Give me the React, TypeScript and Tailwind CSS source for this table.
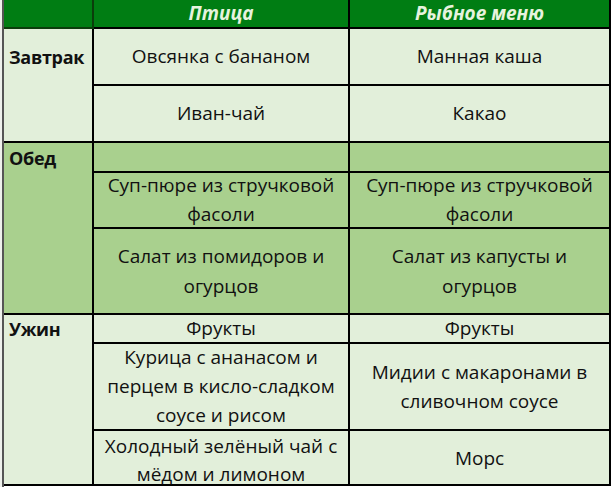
const cell =
  'flex items-center justify-center text-center border-r-2 border-b-2 border-black';
const label = 'flex items-center pl-[5px] font-bold text-[18px] tracking-[-0.3px]';

export default function App() {
  return (
    <div
      className="flex w-[611px] h-[487px] bg-white text-[19px] text-[#111]"
      style={{ fontFamily: '"Open Sans", "Noto Sans", sans-serif' }}
    >
      <div className="w-[3px] bg-[#eef1ec]" />
      <div className="grid grid-cols-[90px_256px_261px] grid-rows-[29px_57px_57px_30px_56px_86px_29px_87px_55px] border-l-2 border-[#555]">
        {/* header */}
        <div className="bg-[#007d13] border-r-2 border-b-2 border-[#0b3d0b]" />
        <div className={`${cell} bg-[#007d13] font-bold italic text-[#e6f3de]`}>Птица</div>
        <div className={`${cell} bg-[#007d13] font-bold italic text-[#e6f3de]`}>Рыбное меню</div>

        {/* Завтрак */}
        <div className="row-span-2 bg-[#e2efda] border-r-2 border-b-2 border-black">
          <div className={`h-[57px] ${label}`}>Завтрак</div>
        </div>
        <div className={`${cell} bg-[#e2efda]`}>Овсянка с бананом</div>
        <div className={`${cell} bg-[#e2efda]`}>Манная каша</div>
        <div className={`${cell} bg-[#e2efda]`}>Иван-чай</div>
        <div className={`${cell} bg-[#e2efda]`}>Какао</div>

        {/* Обед */}
        <div className="row-span-3 bg-[#a9d08e] border-r-2 border-b-2 border-black">
          <div className={`h-[30px] ${label}`}>Обед</div>
        </div>
        <div className={`${cell} bg-[#a9d08e]`} />
        <div className={`${cell} bg-[#a9d08e]`} />
        <div className={`${cell} bg-[#a9d08e] leading-[29px]`}>
          Суп-пюре из стручковой
          <br />
          фасоли
        </div>
        <div className={`${cell} bg-[#a9d08e] leading-[29px]`}>
          Суп-пюре из стручковой
          <br />
          фасоли
        </div>
        <div className={`${cell} bg-[#a9d08e] leading-[30px]`}>
          Салат из помидоров и
          <br />
          огурцов
        </div>
        <div className={`${cell} bg-[#a9d08e] leading-[30px]`}>
          Салат из капусты и
          <br />
          огурцов
        </div>

        {/* Ужин */}
        <div className="row-span-3 bg-[#e2efda] border-r-2 border-b-2 border-black">
          <div className={`h-[29px] ${label}`}>Ужин</div>
        </div>
        <div className={`${cell} bg-[#e2efda]`}>Фрукты</div>
        <div className={`${cell} bg-[#e2efda]`}>Фрукты</div>
        <div className={`${cell} bg-[#e2efda] leading-[29px]`}>
          Курица с ананасом и
          <br />
          перцем в кисло-сладком
          <br />
          соусе и рисом
        </div>
        <div className={`${cell} bg-[#e2efda] leading-[29px]`}>
          Мидии с макаронами в
          <br />
          сливочном соусе
        </div>
        <div className={`${cell} bg-[#e2efda] leading-[28px] pt-[4px]`}>
          Холодный зелёный чай с
          <br />
          мёдом и лимоном
        </div>
        <div className={`${cell} bg-[#e2efda] pt-[2px]`}>Морс</div>
      </div>
    </div>
  );
}
